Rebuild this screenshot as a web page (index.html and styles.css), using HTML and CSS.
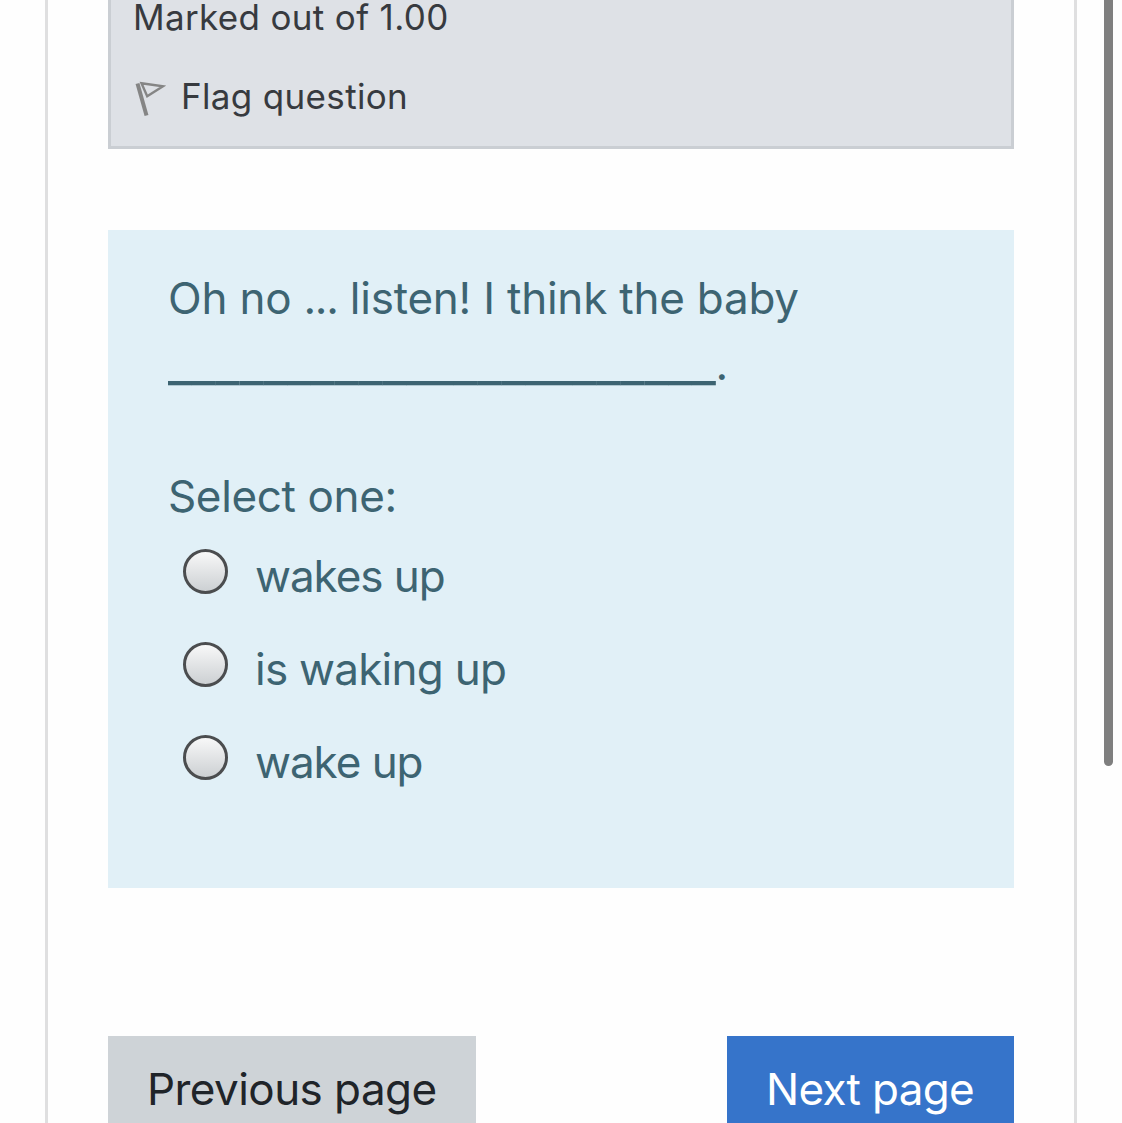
FILE: index.html
```html
<!DOCTYPE html>
<html lang="en">
<head>
<meta charset="utf-8">
<title>Quiz</title>
<link rel="stylesheet" href="styles.css">
</head>
<body>
<main class="frame">
  <section class="info">
    <div class="grade">Marked out of 1.00</div>
    <div class="flag">
      <svg class="flag-icon" viewBox="0 0 32 38" width="32" height="38" fill="none" stroke="#858585">
        <path d="M3.5 3.5 12.5 35.5" stroke-width="4"/>
        <path d="M7.5 3.3 29 6.3 13.2 16.3Z" stroke-width="2.4"/>
      </svg>
      <span class="flag-text">Flag question</span>
    </div>
  </section>
  <section class="question">
    <p class="prompt"><span class="sentence">Oh no <span class="dots">...</span> listen! I think the baby</span><br><span class="blank">_______________________</span>.</p>
    <div class="select">Select one:</div>
    <div class="answers">
      <label class="answer"><input class="radio" type="radio" name="answer"><span class="short">wakes up</span></label>
      <label class="answer"><input class="radio" type="radio" name="answer"><span class="long">is waking up</span></label>
      <label class="answer"><input class="radio" type="radio" name="answer"><span class="short">wake up</span></label>
    </div>
  </section>
  <nav class="buttons">
    <button class="btn prev">Previous page</button>
    <button class="btn next">Next page</button>
  </nav>
</main>
<div class="scrollbar"></div>
</body>
</html>
```
FILE: styles.css
```css
* { box-sizing: border-box; }
body {
  margin: 0;
  height: 1123px;
  overflow: hidden;
  background: #fefefe;
  font-family: Inter, "Liberation Sans", sans-serif;
  font-size: 44px;
  line-height: 66px;
  white-space: nowrap;
}
.frame {
  display: flow-root;
  width: 1032px;
  height: 1123px;
  margin-left: 45px;
  padding: 0 60px;
  border: solid #dfdfe0;
  border-width: 0 3px;
}
.info {
  height: 149px;
  padding: 0 22px;
  border: 3px solid #caced3;
  border-top: 0;
  background: #dee1e6;
  color: #373a3f;
  font-size: 35px;
  line-height: 34px;
  letter-spacing: 0.34px;
}
.flag {
  display: flex;
  align-items: center;
  margin-top: 39px;
}
.flag-icon { margin: 7px 15px 0 1px; }
.question {
  height: 658px;
  margin-top: 81px;
  padding: 35px 60px 0;
  background: #e1f0f7;
  color: #3d6472;
}
.prompt { margin: 0; }
.sentence { letter-spacing: -0.22px; }
.dots { letter-spacing: -1.3px; }
.blank {
  font-size: 52.8px;
  line-height: 0;
  letter-spacing: -0.27px;
  vertical-align: -1px;
}
.select {
  margin-top: 66px;
  letter-spacing: -0.36px;
}
.answers {
  display: grid;
  gap: 27px;
  margin-top: 14px;
}
.answer {
  display: flex;
  align-items: flex-start;
}
.short { letter-spacing: -1.05px; }
.long { letter-spacing: -0.75px; }
.radio {
  appearance: none;
  flex: none;
  width: 45px;
  height: 45px;
  margin: 6px 27.5px 0 14.5px;
  border: 3px solid #4b4d4f;
  border-radius: 50%;
  background: linear-gradient(#fbfbfb, #c9cdd0) border-box;
}
.buttons {
  display: flex;
  justify-content: space-between;
  margin-top: 148px;
}
.btn {
  height: 87px;
  padding: 20px 0 1px 39px;
  border: 0;
  font: inherit;
  text-align: left;
}
.prev {
  width: 368px;
  background: #ced3d7;
  color: #1f2429;
  letter-spacing: -0.56px;
}
.next {
  width: 287px;
  background: #3674ca;
  color: #fff;
  letter-spacing: -0.7px;
}
.scrollbar {
  position: absolute;
  top: 0;
  left: 1104px;
  width: 9px;
  height: 766px;
  border-radius: 0 0 5px 5px;
  background: #7f7f7f;
}
```
